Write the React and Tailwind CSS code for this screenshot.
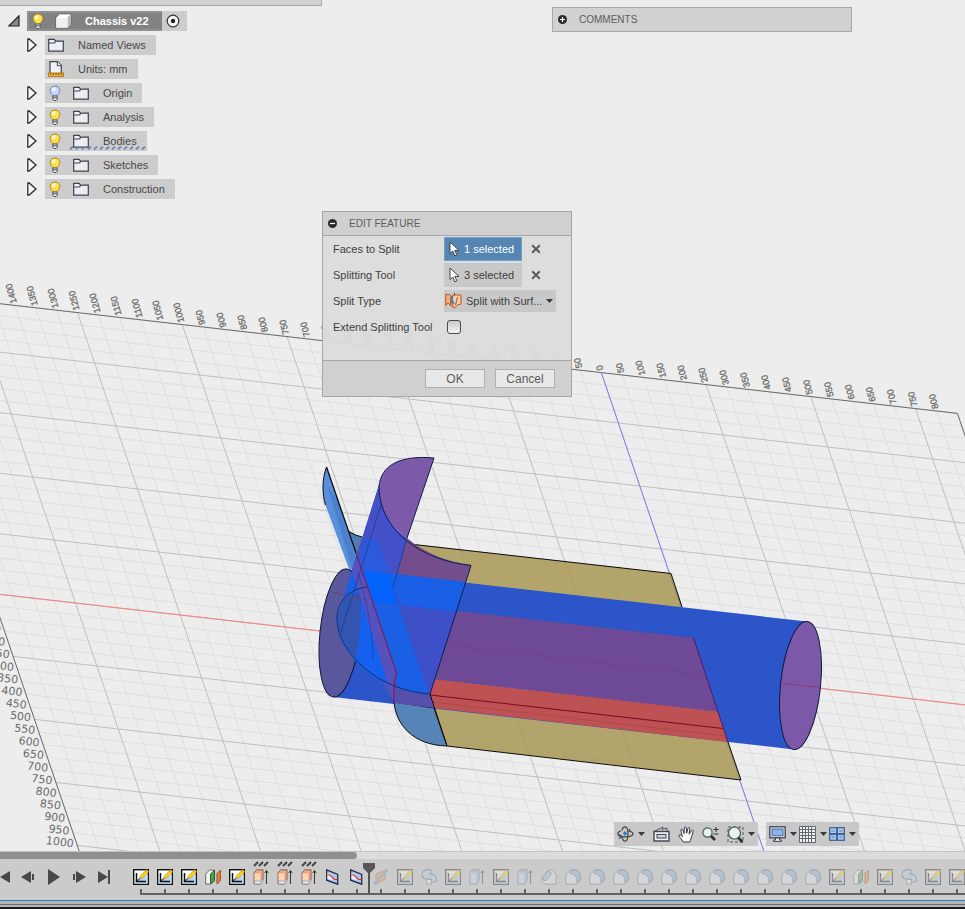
import React, { useState } from 'react';

/* ---------- Icons ---------- */

const BulbIcon = ({ on = true }) => (
    <svg width="12" height="16" viewBox="0 0 12 16" aria-hidden="true">
        <path
            d="M6 1C3.2 1 1.2 3 1.2 5.4c0 2 1.2 3 2 4.2.3.5.4 1 .5 1.5h4.6c.1-.5.2-1 .5-1.5.8-1.2 2-2.2 2-4.2C10.8 3 8.8 1 6 1Z"
            fill={on ? '#ffe14a' : '#c3d6fb'}
            stroke={on ? '#b08a1e' : '#6f86b8'}
        />
        <ellipse cx="4.8" cy="4.2" rx="1.8" ry="2" fill="#fff" opacity=".8" />
        <path d="M3.8 11h4.4v3.2l-1 1.3H4.8l-1-1.3Z" fill="#eee" stroke="#555" />
        <path d="M4 12.8h4" stroke="#555" />
    </svg>
);

const FolderIcon = () => (
    <svg width="16" height="14" viewBox="0 0 16 14" aria-hidden="true">
        <path d="M.7 13.2V1.3h5.5l1.3 1.9h7.8v10Z" fill="#eceef1" stroke="#3c4350" strokeWidth="1.2" />
        <path d="M.7 5h5.8l1.2-1.6" fill="none" stroke="#3c4350" strokeWidth="1.2" />
    </svg>
);

const UnitsIcon = () => (
    <svg width="16" height="16" viewBox="0 0 16 16" aria-hidden="true">
        <path d="M2 12V.7h7.5l3.8 3.8V12" fill="#eef1f5" stroke="#3c4350" strokeWidth="1.2" />
        <path d="M9.3.7v4h4" fill="#fff" stroke="#3c4350" />
        <rect x=".5" y="12" width="15" height="3.4" fill="#f5b73a" stroke="#b87812" />
        <path d="M3 12v2M5.5 12v2M8 12v2M10.500 12v2M13 12v2" stroke="#8a5608" />
    </svg>
);

const CubeIcon = () => (
    <svg width="17" height="16" viewBox="0 0 17 16" aria-hidden="true">
        <path d="M.8 4.5 4.6.8h11.5v10.5l-3.600 3.9H.8Z" fill="#fff" stroke="#5c5c5c" />
        <path d="M12.5 4.5 16 .9v10.400l-3.500 3.800Z" fill="#b9b9b9" />
        <path d="M1.3 5h11v9.700h-11Z" fill="#f1f1f1" />
    </svg>
);

const ArrowRight = () => (
    <svg width="10" height="14" viewBox="0 0 10 14" aria-hidden="true">
        <path d="M.8 1v12h1.400L9 7 2.200 1Z" fill="#f6f6f6" stroke="#2c2c2c" strokeWidth="1.3" />
    </svg>
);

const CursorIcon = () => (
    <svg width="11" height="16" viewBox="0 0 11 16" aria-hidden="true">
        <path d="M1 1v11.5l2.800-2.400 2 4.700 2-.9-2-4.500H10Z" fill="#fff" stroke="#444" strokeWidth="1" />
    </svg>
);

const SplitIcon = () => (
    <svg width="17" height="16" viewBox="0 0 17 16" aria-hidden="true">
        <path d="M.8 1.5h4l1 2v9L3 10 .8 12.500Z" fill="#f6b07c" stroke="#b8561a" />
        <path d="M7.5 2.500 10 2h6v9l-3.500 1L9 15.200 5.500 12Z" fill="#fbcba4" stroke="#b8561a" />
        <path d="M8 2.500c-2.500 3-1 6 1 8.500" fill="none" stroke="#2d7fd0" strokeWidth="1.8" />
        <path d="m12.500 4-2 8M5.500 8.500l3 5" stroke="#b8561a" />
        <path d="M9.500 0v2" stroke="#444" />
    </svg>
);

const Caret = () => (
    <svg width="7" height="4" viewBox="0 0 7 4" aria-hidden="true">
        <path d="M0 0h7L3.500 4Z" fill="#3a3a3a" />
    </svg>
);

const CrossIcon = () => (
    <svg width="10" height="10" viewBox="0 0 10 10" aria-hidden="true">
        <path d="m1.2 1.2 7.600 7.600M8.800 1.200 1.200 8.800" stroke="#5a5a5a" strokeWidth="2" />
    </svg>
);

const ToggleDot = ({ plus }) => (
    <svg width="9" height="9" viewBox="0 0 9 9" aria-hidden="true">
        <circle cx="4.5" cy="4.5" r="4.5" fill="#2b2b2b" />
        <path d={plus ? 'M2 4.500h5M4.500 2v5' : 'M2 4.500h5'} stroke="#fff" strokeWidth="1.2" />
    </svg>
);

const OrbitIcon = () => (
    <svg width="17" height="16" viewBox="0 0 17 16" aria-hidden="true">
        <g fill="none" stroke="#444" strokeWidth="1.2">
            <path d="M5 4.500C5.500 2 6.500.8 8 .8c2 0 3 3 3 7s-1 7.400-3 7.400c-1.300 0-2.400-1.600-2.800-3.600" />
            <path d="M4 5C2 5.500.8 6.500.8 7.500c0 1.900 3 3.300 7.200 3.300 4 0 8-1 8-3 0-1.300-1.600-2.200-3.600-2.800" />
            <path d="m2 8.500 3 2-3 2M14 6l-2-1 1-2" />
        </g>
        <path d="M8 5.500v4M6 7.500h4" stroke="#1976d2" strokeWidth="1.6" />
    </svg>
);

const LookAtIcon = () => (
    <svg width="17" height="16" viewBox="0 0 17 16" aria-hidden="true">
        <path d="m2 5 8-4-1 2.500L14 2v3" fill="none" stroke="#555" />
        <rect x="1" y="5.5" width="15" height="9.5" fill="#f0f0f0" stroke="#3c4350" strokeWidth="1.4" />
        <rect x="4" y="8.5" width="9" height="3.5" fill="#d0d6df" stroke="#3c4350" />
    </svg>
);

const HandIcon = () => (
    <svg width="17" height="17" viewBox="0 0 17 17" aria-hidden="true">
        <path
            d="M5.500 16 2 11.500.8 9.300c.6-1 1.700-.7 2.400.2l1.200 1.300L2.800 4.200c.3-1.200 1.600-1.200 2-.2l1.400 3.600L6.300 1.800c.3-1.200 1.700-1.200 2 0l.4 5.400 1.300-5c.5-1.100 1.800-.8 1.900.4l-.8 5.600L13.500 4.600c.8-.9 1.900-.3 1.700.8l-2 6.600-1.500 4Z"
            fill="#f8f8f8"
            stroke="#3a3f48"
        />
    </svg>
);

const ZoomIcon = () => (
    <svg width="17" height="16" viewBox="0 0 17 16" aria-hidden="true">
        <path d="m8 9 5 5" stroke="#333" strokeWidth="2.8" />
        <circle cx="5.5" cy="6.5" r="4.6" fill="#e6f3f1" stroke="#555" strokeWidth="1.2" />
        <path d="M11.500 3.500h5M14 1v5M11.500 8h5" stroke="#333" />
    </svg>
);

const ZoomWindowIcon = () => (
    <svg width="17" height="17" viewBox="0 0 17 17" aria-hidden="true">
        <path d="M1 1h15v15H1Z" fill="none" stroke="#555" strokeDasharray="3 2" />
        <path d="m10.500 11 5 5" stroke="#333" strokeWidth="2.8" />
        <circle cx="7.5" cy="7" r="6" fill="#e6f3f1" stroke="#555" strokeWidth="1.2" />
    </svg>
);

const DisplayIcon = () => (
    <svg width="17" height="16" viewBox="0 0 17 16" aria-hidden="true">
        <rect x=".8" y=".8" width="15.4" height="11" fill="#f1f1f1" stroke="#3c4350" strokeWidth="1.3" />
        <rect x="3" y="3" width="11" height="6.8" fill="#8db4ea" stroke="#44659c" />
        <path d="M6.500 12h4v2h2v1.400h-8V14h2Z" fill="#eee" stroke="#3c4350" />
    </svg>
);

const GridIcon = () => (
    <svg width="17" height="17" viewBox="0 0 17 17" aria-hidden="true">
        <rect x=".5" y=".5" width="16" height="16" fill="#f2f2f2" />
        <path
            d="M.5.5v16M3.500.5v16M6.500.5v16M9.500.5v16M12.500.5v16M16.500.5v16M.5.5h16M.5 3.500h16M.5 6.500h16M.5 9.500h16M.5 12.500h16M.5 16.500h16"
            stroke="#63676f"
        />
    </svg>
);

const ViewportsIcon = () => (
    <svg width="16" height="14" viewBox="0 0 16 14" aria-hidden="true">
        <g fill="#a9c6ee" stroke="#3d5c8f" strokeWidth="1.2">
            <rect x=".7" y=".7" width="7" height="6" />
            <rect x="8.3" y=".7" width="7" height="6" />
            <rect x=".7" y="7.3" width="7" height="6" />
            <rect x="8.3" y="7.3" width="7" height="6" />
        </g>
        <path d="M2.500 3.500h3v1h-3ZM10.500 3.500h3v1h-3ZM2.500 9.500h3v1h-3ZM10.500 9.500h3v1h-3Z" fill="none" stroke="#86a6d6" />
    </svg>
);

/* Timeline feature icons, all on a 16px box */
const featureShapes = {
    sketch: (
        <>
            <rect x=".7" y=".7" width="14.6" height="14.6" fill="#fff" stroke="#111" strokeWidth="1.4" />
            <path d="M1.500 14.500V11L14.500 6v8.500Z" fill="#b9d5f0" />
            <path d="M3.500 4v8.500h9.500" fill="none" stroke="#111" strokeWidth="1.5" />
            <path d="M3.500 12.500 8 8.500" stroke="#111" />
            <path d="m6.500 10 1-3L13.500.8l2.200 2L9.500 9Z" fill="#ffd21e" stroke="#a8780c" strokeWidth=".6" />
            <path d="m12.700 1.600 1.100-1.100 2.100 2-1.100 1.100Z" fill="#f09030" />
        </>
    ),
    split: (
        <>
            <path d="M.7 5 4.500 1h4v11L5 15H.7Z" fill="#f2f4f2" stroke="#6c6c6c" />
            <path d="m5.500 5 4-3.800v10.600L5.500 15Z" fill="#4f9f52" stroke="#2c602f" />
            <path d="m12 4.500 3.300-3.300v10.600L12 15Z" fill="#e8834c" stroke="#9a4716" />
        </>
    ),
    extrude: (
        <>
            <path d="m1 4 2.500-3.200H10v10L7.500 15H1Z" fill="#f4a57a" stroke="#7a6a66" />
            <path d="M1.500 4.300h5.800v8H1.500Z" fill="#fdd3b8" />
            <path d="M1.500 12h6l2.300-3v2.500L7.500 15h-6Z" fill="#e8e8ee" stroke="#8a8a92" strokeWidth=".7" />
            <path d="M13.500 15V2M11.800 4l1.700-2.500L15.200 4" fill="none" stroke="#333" />
        </>
    ),
    extrudeCut: (
        <>
            <path d="m1 4 2.500-3.200H10v10L7.500 15H1Z" fill="#9dbbe2" stroke="#667" />
            <path d="M1.500 4.300h5.800v10H1.500Z" fill="#c9dbf2" />
            <path d="M13.500 15V2M11.800 4l1.700-2.500L15.200 4" fill="none" stroke="#333" />
        </>
    ),
    surface: (
        <>
            <path d="M1.700.9v10.300l11 4V5.500Z" fill="#a9ccf2" stroke="#1c2c48" strokeWidth="1.3" />
            <path d="m2.300 4 5 2.500v5l-5-2Z" fill="#eaf2fb" />
            <path d="M1.700 6 5 6l4 4 3.700.8" fill="none" stroke="#e32626" strokeWidth="1.2" />
        </>
    ),
    plane: (
        <>
            <path d="m3 5 9-3.500v9L3 15Z" fill="#f39a5e" stroke="#b26430" />
            <path d="m5 8 5-2v4l-5 2Z" fill="#f9c49e" stroke="#b26430" strokeWidth=".7" />
            <path d="M2 14.500 13 2" stroke="#4a86d6" strokeWidth="1.2" />
            <path d="M.5 13h3v3h-3ZM12 .5h3v3h-3Z" fill="#5a93dd" />
        </>
    ),
    loft: (
        <>
            <path
                d="M1 5.500C1 2.500 3.500.9 6 .9h3.500c1.800.2 1.800 3.800 0 4.100H8c2-.2 3.500.2 5 1.200 1.500 1 2.200 2.400 2.200 4 0 2-1.200 2.800-3 2.800H10V10H5C2.500 10 1 8 1 5.500Z"
                fill="#b8cfe8"
                stroke="#5f7088"
                strokeWidth="1.2"
            />
            <path d="M5.500 10.500h4.700v4.700H5.500Z" fill="#f6f6f6" stroke="#667" />
        </>
    ),
    chamfer: (
        <>
            <path d="M.9 8.500 7.500 1h4l3.700 5v9.200H4L.9 12Z" fill="#e4e8ed" stroke="#6a7078" />
            <path d="M.9 9 7.500 1.500l3 3L4 12Z" fill="#a9c6e8" stroke="#4b6688" />
        </>
    ),
    fillet: (
        <>
            <path d="M.8 15.200V6L5.500 1h5.500c2.800 1 4.300 4 4.300 7v3L11 15.200Z" fill="#e8ebef" stroke="#6a7078" />
            <path d="M6 1h5c2.800 1 4.300 4 4.300 7v3L12 13.500C12 8 10.500 5 5.500 4.500Z" fill="#8fb3e0" stroke="#4b6688" />
        </>
    ),
};

const FeatureIcon = ({ type }) => (
    <svg width="16" height="16" viewBox="0 0 16 16" aria-hidden="true">
        {featureShapes[type]}
    </svg>
);

/* ---------- 3D scene ---------- */

// Ground plane: one grid step is 50 mm
const ORIGIN = [704, 675];
const U = [20.95, 2.4];
const V = [4.28, 12.6];
const I_MIN = -34;
const I_MAX = 17;
const J_MIN = -24;
const J_MAX = 24;

const project = (i, j) => [ORIGIN[0] + i * U[0] + j * V[0], ORIGIN[1] + i * U[1] + j * V[1]];

const range = (from, to) => Array.from({ length: to - from + 1 }, (_, k) => from + k);

const GridLine = ({ a, b, color }) => {
    const [x1, y1] = project(a[0], a[1]);
    const [x2, y2] = project(b[0], b[1]);
    return <line x1={x1} y1={y1} x2={x2} y2={y2} stroke={color} />;
};

const isMajor = (n) => n % 5 === 0;

const GridLines = ({ major }) => {
    const color = major ? '#bfbfbf' : '#dfdfdf';
    return (
        <>
            {range(I_MIN, I_MAX)
                .filter((i) => isMajor(i) === major)
                .map((i) => (
                    <GridLine key={`i${i}`} a={[i, J_MIN]} b={[i, J_MAX]} color={color} />
                ))}
            {range(J_MIN, J_MAX)
                .filter((j) => isMajor(j) === major)
                .map((j) => (
                    <GridLine key={`j${j}`} a={[I_MIN, j]} b={[I_MAX, j]} color={color} />
                ))}
        </>
    );
};

const Ground = () => (
    <g>
        <GridLines major={false} />
        <GridLines major />
        <GridLine a={[I_MIN, J_MIN]} b={[I_MAX, J_MIN]} color="#6a6a6a" />
        <GridLine a={[I_MIN, J_MIN]} b={[I_MIN, J_MAX]} color="#6a6a6a" />
        <GridLine a={[I_MAX, J_MIN]} b={[I_MAX, J_MAX]} color="#6a6a6a" />
        <GridLine a={[I_MIN, 0]} b={[I_MAX, 0]} color="#f98080" />
        <GridLine a={[0, J_MIN]} b={[0, J_MAX]} color="#8080f4" />

        <g fill="#6c6c6c" stroke="#6c6c6c" strokeWidth=".3" fontSize="9" fontFamily="'Liberation Sans', sans-serif">
            {range(-28, 16).map((i) => {
                const [x, y] = project(i, J_MIN);
                return (
                    <text key={i} transform={`translate(${x + 2} ${y - 3}) rotate(-105)`}>
                        {Math.abs(i * 50)}
                    </text>
                );
            })}
        </g>
        <g fill="#6c6c6c" fontSize="11" textAnchor="end" fontFamily="'DejaVu Sans', sans-serif">
            {range(3, 20).map((j) => {
                const [x, y] = project(I_MIN, j);
                return (
                    <text key={j} transform={`translate(${x - 4} ${y + 2}) rotate(7)`}>
                        {j * 50}
                    </text>
                );
            })}
        </g>
    </g>
);

const Model = () => (
    <g strokeLinejoin="round">
        {/* Flat sheet */}
        <path d="M377 540 671 573.500 741 780 447 746Z" fill="#a4904a" fillOpacity=".79" />
        <path d="M349 531.500Q358 537 377 540L400 610 366 590Z" fill="#4f7db3" />

        {/* Tube body */}
        <path d="M346 569 807 621.500 794 749.500 333 697Z" fill="#2b55c8" />
        <path d="M397 604 693.500 638 717.500 711.500 427 678Z" fill="#6e4a96" />
        <path d="M425 678 717.500 711.500 728 742 434 708Z" fill="#be5153" />
        <path d="M440 644 704 675" stroke="#7a3f80" strokeOpacity=".6" />
        <path d="M430 695 723 728.500" stroke="#780a28" />
        <path d="M432 702 726 736" stroke="#a84448" strokeOpacity=".7" />
        <path d="m693.500 638 34.500 104" stroke="#5a1560" />

        {/* Sheet outline */}
        <path d="M414 544.500 671 573.500 682 607" fill="none" stroke="#0b0b0b" />
        <path d="M728 742 741 780 447 746" fill="none" stroke="#0b0b0b" />

        {/* Tube ends */}
        <ellipse cx="800.5" cy="685.5" rx="20" ry="64.3" transform="rotate(6 800.5 685.5)" fill="#7b59a8" stroke="#111a3c" />
        <path d="m782 683 38 4.500" stroke="#8b3c80" />
        <ellipse cx="340" cy="633" rx="20" ry="64.3" transform="rotate(6 340 633)" fill="#5a589c" stroke="#0c1838" />

        {/* Lower quarter of the curved face */}
        <path d="M394 702C396 724 412 745 447 746L434 708Z" fill="#5683b8" stroke="#0b0b0b" />
        <path d="M382 680Q402 693 430 695L434 708 394 703Z" fill="#564fae" />

        {/* Left fin */}
        <path d="M326.500 467C322 479 322 494 325.500 505L349 569H362Z" fill="#5a8fdc" />
        <path d="M327 485 337 500 359 568H352Z" fill="#4a80cc" />

        {/* Raised curved face */}
        <path d="M379 485 337 618C338 652 370 690 430 694L471 565C420 558 380 530 379 485Z" fill="#1b5fe4" />
        <path d="M379 485C380 512 393 528 407 538L396 575 352 570Z" fill="#4350c8" />
        <path d="M407 538C425 553 448 563 471 565L466 582 397 574Z" fill="#744d8d" />
        <path d="M366 537 377 540 390 575 357 570Z" fill="#2b5bdc" />
        <path d="M352 569.500 466 582 457 612 356 600Z" fill="#195fe6" />
        <path d="M358 570 390 574 398 604 363 600Z" fill="#0362fb" />
        <path d="M393 587 398 604.500 457 612 430 694Z" fill="#3d50c7" />
        <path d="M394 587 399 604.500 457 612 461 600Z" fill="#1a5fe6" />
        <path d="M345 597 362 592V640Q360 652 356 659C345 645 338 632 338 616Z" fill="#3355b0" />
        <path d="M361 592C361 620 360 640 356 659Q366 672 388 684Z" fill="#1660ee" />
        <path d="M434 458C402 455 380 464 379 488 380 512 393 528 407 538Z" fill="#7c5aa9" />

        {/* Strip behind the cut */}
        <path d="M352 570 358 557 396.500 673 394 702 382 665Z" fill="#5652bd" />

        {/* Curved face edges */}
        <g fill="none" stroke="#10306e">
            <path d="M434 458C402 455 380 464 379 488 380 530 420 560 471 565.500L430 694" stroke="#131c4c" />
            <path d="M434 458 407 538" stroke="#131c4c" />
            <path d="M407 538 393 587" stroke="#1c3f9c" />
            <path d="M430 694C375 690 336 650 337 617 338 600 350 589 367 587" />
            <path d="M381 505 341 632" strokeOpacity=".5" />
            <path d="M358 572C366 600 373 630 373 660" strokeOpacity=".4" />
        </g>
        <path d="M393 587 430 694" stroke="#5b3fa5" strokeOpacity=".7" />
        <path d="M430 694 447 746" stroke="#0b0b0b" />
        <path d="M349 531.500Q356 536 362 537" fill="none" stroke="#0b0b0b" />
        <path d="M326.500 467 356 553" stroke="#0b0b0b" strokeWidth="1.3" />
        <path d="M325.500 505C322 494 322 479 326.500 467" fill="none" stroke="#0b0b0b" />
        <path d="M356 553 396.500 673Q393 686 394 702" fill="none" stroke="#8a1140" />
        <path d="m332 592 34 8" stroke="#7a3070" strokeOpacity=".6" />
    </g>
);

const Scene = () => (
    <svg
        className="absolute inset-0 h-full w-full"
        viewBox="0 0 965 851"
        preserveAspectRatio="xMinYMin slice"
        role="img"
        aria-label="Model view"
    >
        <Ground />
        <Model />
    </svg>
);

/* ---------- Browser tree ---------- */

const treeItems = [
    { label: 'Named Views', icon: 'folder' },
    { label: 'Units: mm', icon: 'units', leaf: true },
    { label: 'Origin', icon: 'folder', bulb: 'off' },
    { label: 'Analysis', icon: 'folder', bulb: 'on' },
    { label: 'Bodies', icon: 'folder', bulb: 'on', marked: true },
    { label: 'Sketches', icon: 'folder', bulb: 'on' },
    { label: 'Construction', icon: 'folder', bulb: 'on' },
];

const TreeRow = ({ item }) => (
    <li className="flex h-5 items-center pl-[27px]">
        {item.leaf ? (
            <span className="w-[18px]" />
        ) : (
            <button type="button" className="flex w-[18px]" aria-label={`Expand ${item.label}`}>
                <ArrowRight />
            </button>
        )}
        <div className="relative flex h-5 items-center bg-[#cccccc] pr-[10px] pl-[3px]">
            {item.bulb && (
                <button type="button" className="mr-3 ml-px flex" aria-label={`Toggle ${item.label}`}>
                    <BulbIcon on={item.bulb === 'on'} />
                </button>
            )}
            {item.icon === 'units' ? <UnitsIcon /> : <FolderIcon />}
            <span className="ml-[14px]">{item.label}</span>
            {item.marked && (
                <svg className="absolute bottom-px left-6" width="78" height="4" aria-hidden="true">
                    {range(0, 12).map((n) => (
                        <path key={n} d={`M${n * 6 + 1} 3.500l3-3`} stroke="#6d88b5" strokeWidth="1.8" />
                    ))}
                </svg>
            )}
        </div>
    </li>
);

const BrowserTree = () => (
    <nav className="relative w-fit text-[11px] leading-5 text-[#484848]" aria-label="Browser">
        <div className="mt-[5px] flex h-5 items-center pl-2">
            <button type="button" className="flex w-[19px]" aria-label="Collapse Chassis v22">
                <svg width="12" height="12" viewBox="0 0 12 12" aria-hidden="true">
                    <path d="M11 .8V11H.8Z" fill="#888" stroke="#222" strokeWidth="1.2" />
                </svg>
            </button>
            <div className="flex h-5 items-center bg-[#cccccc]">
                <div className="flex h-5 w-[135px] items-center border-2 border-r-0 border-[#919191] bg-[#828282] pl-[3px]">
                    <BulbIcon />
                    <span className="ml-[11px]">
                        <CubeIcon />
                    </span>
                    <span className="ml-[13px] font-bold text-white">Chassis v22</span>
                </div>
                <button type="button" className="flex w-[25px] pl-1" aria-label="Activate component">
                    <svg width="14" height="14" viewBox="0 0 14 14" aria-hidden="true">
                        <circle cx="7" cy="7" r="5.8" fill="#f6f6f6" stroke="#333" strokeWidth="1.2" />
                        <circle cx="7" cy="7" r="2.2" fill="#222" />
                    </svg>
                </button>
            </div>
        </div>
        <ul className="mt-1 flex flex-col gap-1">
            {treeItems.map((item) => (
                <TreeRow key={item.label} item={item} />
            ))}
        </ul>
    </nav>
);

/* ---------- Panels ---------- */

const CommentsPanel = () => (
    <button
        type="button"
        className="absolute top-[7px] left-[552px] flex h-[25px] w-[300px] items-center gap-3 border border-[#a8a8a8] bg-[#d1d1d1] pl-[5px] text-[10px] text-[#5c5c5c]"
    >
        <ToggleDot plus />
        COMMENTS
    </button>
);

const SelectionField = ({ id, label, count, active, onPick, onClear }) => (
    <>
        <label htmlFor={id}>{label}</label>
        <div className="flex items-center gap-[9px]">
            <button
                id={id}
                type="button"
                onClick={onPick}
                className={
                    active
                        ? 'flex h-6 w-[78px] items-center gap-1 border border-[#6f9fc8] bg-[#5586b2] pl-1 text-white'
                        : 'flex h-6 w-[78px] items-center gap-1 bg-[#c8c8c8] pl-[5px]'
                }
            >
                <CursorIcon />
                {count} selected
            </button>
            <button type="button" onClick={onClear} aria-label={`Clear ${label}`}>
                <CrossIcon />
            </button>
        </div>
    </>
);

const EditFeatureDialog = () => {
    const [active, setActive] = useState('faces');
    const [faces, setFaces] = useState(1);
    const [tools, setTools] = useState(3);
    const [extend, setExtend] = useState(false);

    return (
        <form
            className="absolute top-[211px] left-[322px] w-[250px] border border-[#a6a6a6] text-[11px] text-[#3f3f3f]"
            onSubmit={(e) => e.preventDefault()}
        >
            <h2 className="flex h-[23px] items-center gap-3 bg-[#d0d0d0] pl-[5px] text-[10px] text-[#5c5c5c]">
                <ToggleDot />
                EDIT FEATURE
            </h2>
            <div className="grid h-[125px] auto-rows-[26px] grid-cols-[111px_1fr] items-center border-t border-[#a6a6a6] bg-[#dcdcdc]/95 pl-[10px]">
                <SelectionField
                    id="faces"
                    label="Faces to Split"
                    count={faces}
                    active={active === 'faces'}
                    onPick={() => setActive('faces')}
                    onClear={() => setFaces(0)}
                />
                <SelectionField
                    id="tools"
                    label="Splitting Tool"
                    count={tools}
                    active={active === 'tools'}
                    onPick={() => setActive('tools')}
                    onClear={() => setTools(0)}
                />
                <label htmlFor="splitType">Split Type</label>
                <div className="relative flex h-[22px] w-[112px] items-center bg-[#c8c8c8] pl-px">
                    <SplitIcon />
                    <select id="splitType" className="ml-1 h-full flex-1 appearance-none bg-transparent">
                        <option>Split with Surf...</option>
                        <option>Along Vector</option>
                        <option>Closest Point</option>
                    </select>
                    <span className="pointer-events-none absolute right-[3px]">
                        <Caret />
                    </span>
                </div>
                <label htmlFor="extend">Extend Splitting Tool</label>
                <input
                    id="extend"
                    type="checkbox"
                    checked={extend}
                    onChange={(e) => setExtend(e.target.checked)}
                    className="ml-[3px] h-[14px] w-[14px] appearance-none rounded-[3px] border border-[#4a4a4a] bg-linear-to-b from-[#c9c9c9] to-[#f4f4f4] checked:from-[#5586b2]"
                />
            </div>
            <div className="flex h-9 items-center justify-end gap-[10px] border-t border-[#a6a6a6] bg-[#d0d0d0] pr-4 text-xs text-[#5c5c5c]">
                <button type="submit" className="h-[19px] w-[60px] border border-[#b0b0b0] bg-[#e8e8e8]">
                    OK
                </button>
                <button type="button" className="h-[19px] w-[60px] border border-[#b0b0b0] bg-[#e8e8e8]">
                    Cancel
                </button>
            </div>
        </form>
    );
};

const ToolButton = ({ label, menu, children }) => (
    <button type="button" className="flex items-center gap-1" aria-label={label}>
        {children}
        {menu && <Caret />}
    </button>
);

const ViewToolbar = () => (
    <div className="absolute right-[106px] bottom-[5px] flex gap-2" role="toolbar" aria-label="View">
        <div className="flex h-6 w-36 items-center justify-between bg-[#c8c8c8] px-[3px]">
            <ToolButton label="Orbit" menu>
                <OrbitIcon />
            </ToolButton>
            <ToolButton label="Look At">
                <LookAtIcon />
            </ToolButton>
            <ToolButton label="Pan">
                <HandIcon />
            </ToolButton>
            <ToolButton label="Zoom">
                <ZoomIcon />
            </ToolButton>
            <ToolButton label="Zoom Window" menu>
                <ZoomWindowIcon />
            </ToolButton>
        </div>
        <div className="flex h-6 w-[93px] items-center justify-between bg-[#c8c8c8] px-[3px]">
            <ToolButton label="Display Settings" menu>
                <DisplayIcon />
            </ToolButton>
            <ToolButton label="Grid and Snaps" menu>
                <GridIcon />
            </ToolButton>
            <ToolButton label="Viewports" menu>
                <ViewportsIcon />
            </ToolButton>
        </div>
    </div>
);

/* ---------- Timeline ---------- */

const done = ['sketch', 'sketch', 'sketch', 'split', 'sketch', 'extrude', 'extrude', 'extrude', 'surface', 'surface'];

const rolledBack = [
    'plane', 'sketch', 'loft', 'sketch', 'extrudeCut', 'sketch', 'extrudeCut', 'chamfer',
    'fillet', 'fillet', 'fillet', 'fillet', 'fillet', 'fillet', 'fillet', 'fillet', 'fillet', 'fillet', 'fillet',
    'sketch', 'split', 'sketch', 'loft', 'sketch', 'sketch',
];

const playback = [
    { label: 'Step back', d: 'M10 2v12L0 8Z' },
    { label: 'Previous', d: 'M10 2v12L0 8ZM11 5h2v6h-2Z' },
    { label: 'Play', d: 'M2 0v16l12-8Z' },
    { label: 'Next', d: 'M5 2v12l10-6ZM2 5h2v6H2Z' },
    { label: 'End', d: 'M2 2v12l10-6ZM12 1h2v14h-2Z' },
];

const TimelineItem = ({ type, faded, last }) => (
    <li className="relative flex w-6 shrink-0 flex-col items-center">
        <div className="h-2">
            {type === 'extrude' && (
                <svg width="16" height="6" viewBox="0 0 16 6" aria-hidden="true">
                    <path d="m1 5 4-4M6 5l4-4M11 5l4-4" stroke="#444" strokeWidth="2" />
                </svg>
            )}
        </div>
        <button type="button" className={faded ? 'flex opacity-35' : 'flex'} aria-label={type}>
            <FeatureIcon type={type} />
        </button>
        <span className="mt-1 h-1 w-0.5 bg-[#636363]" />
        {last && (
            <svg className="absolute top-0.5 -right-1.5 z-10" width="12" height="30" viewBox="0 0 12 30" aria-hidden="true">
                <path d="M0 0h12v5L7 10v20H5V10L0 5Z" fill="#565656" />
            </svg>
        )}
    </li>
);

const Timeline = () => (
    <footer className="shrink-0 bg-[#cbcbcb]">
        <div className="h-2 border-t border-[#c4c4c4] bg-[#dcdcdc]">
            <div className="h-[7px] w-[37%] rounded-r-full bg-[#8f8f8f]" />
        </div>
        <div className="flex h-[41px] overflow-hidden pt-0.5">
            <div className="flex h-8 shrink-0 items-center">
                {playback.map((b, index) => (
                    <button
                        key={b.label}
                        type="button"
                        aria-label={b.label}
                        className={index === 0 ? 'flex w-4' : 'flex w-[25px] justify-center'}
                    >
                        <svg width="16" height="16" viewBox="0 0 16 16" aria-hidden="true">
                            <path d={b.d} fill="#484848" />
                        </svg>
                    </button>
                ))}
            </div>
            <div className="ml-[13px]">
                <ol className="flex">
                    {done.map((type, index) => (
                        <TimelineItem key={index} type={type} last={index === done.length - 1} />
                    ))}
                    {rolledBack.map((type, index) => (
                        <TimelineItem key={index} type={type} faded />
                    ))}
                </ol>
                <div className="ml-[11px] h-0.5 bg-[#636363]" />
            </div>
        </div>
        <div className="h-px bg-[#1b84d8]" />
        <div className="h-[3px] bg-[#b4b4b4]" />
        <div className="h-px bg-[#6a6a6a]" />
        <div className="h-0.5 bg-[#b4b4b4]" />
        <div className="h-0.5 bg-[#1a1a1a]" />
    </footer>
);

const App = () => (
    <div className="flex h-screen w-full flex-col overflow-hidden bg-[#ededed] font-['Liberation_Sans',Arial,sans-serif]">
        <main className="relative min-h-0 flex-1 overflow-hidden">
            <Scene />
            <div className="relative h-1.5 w-1/3 border-r border-b border-[#a8a8a8] bg-[#d2d2d2]" />
            <BrowserTree />
            <CommentsPanel />
            <EditFeatureDialog />
            <ViewToolbar />
        </main>
        <Timeline />
    </div>
);

export default App;
